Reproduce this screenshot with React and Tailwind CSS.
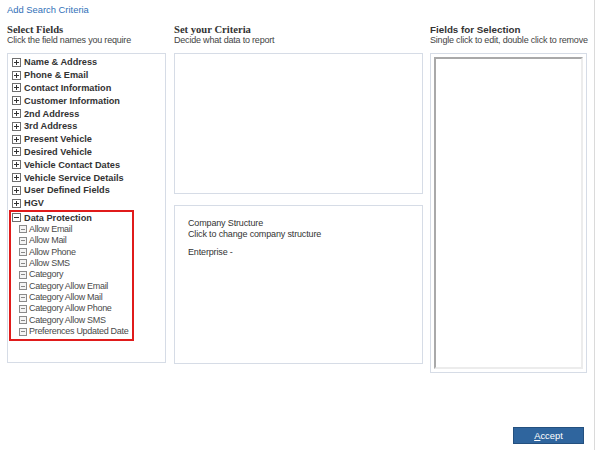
import React from 'react';

const groups = [
  'Name & Address',
  'Phone & Email',
  'Contact Information',
  'Customer Information',
  '2nd Address',
  '3rd Address',
  'Present Vehicle',
  'Desired Vehicle',
  'Vehicle Contact Dates',
  'Vehicle Service Details',
  'User Defined Fields',
  'HGV',
];

const protection = [
  'Allow Email',
  'Allow Mail',
  'Allow Phone',
  'Allow SMS',
  'Category',
  'Category Allow Email',
  'Category Allow Mail',
  'Category Allow Phone',
  'Category Allow SMS',
  'Preferences Updated Date',
];

const Toggle = ({ open }) => (
  <span className="w-[9px] h-[9px] border border-[#6f6f6f] bg-white flex items-center justify-center shrink-0 relative">
    <span className="absolute w-[5px] h-[1px] bg-[#333]" />
    {!open && <span className="absolute w-[1px] h-[5px] bg-[#333]" />}
  </span>
);

const Leaf = () => (
  <span className="w-[8px] h-[8px] border border-[#8a8a8a] bg-[#f4f4f4] flex items-center justify-center shrink-0">
    <span className="w-[4px] h-[1px] bg-[#888]" />
  </span>
);

const Header = ({ title, sub, serif }) => (
  <div className="mb-[7px]">
    <div
      className={`leading-[11px] font-bold text-[#333] whitespace-nowrap ${
        serif ? 'text-[10.6px] font-["Liberation_Serif",serif]' : 'text-[9.8px]'
      }`}
    >
      {title}
    </div>
    <div className="text-[9px] tracking-[-0.2px] leading-[11px] text-[#444] whitespace-nowrap">{sub}</div>
  </div>
);

export default function App() {
  return (
    <div className="w-[597px] h-[450px] bg-white flex font-['Liberation_Sans',Arial,sans-serif] overflow-hidden">
      <div className="w-[595px] h-[450px] border-r border-[#dadada] flex flex-col pl-[7px]">
        <div className="h-[24px] pt-[3px] text-[9.4px] leading-[14px] text-[#3170b8]">Add Search Criteria</div>

        <div className="flex">
          <div className="w-[159px]">
            <Header title="Select Fields" sub="Click the field names you require" serif />
            <div className="h-[310px] border border-[#d6dce6] pt-[2px] pl-[4px]">
              {groups.map((g) => (
                <div key={g} className="h-[12.8px] flex items-center gap-[3px]">
                  <Toggle />
                  <span className="text-[9.2px] leading-[12px] font-bold text-[#333] whitespace-nowrap">{g}</span>
                </div>
              ))}
              <div className="w-[125px] border-2 border-[#e01b1b] -ml-[3px] pl-[1px] pb-[2px]">
                <div className="h-[12px] flex items-center gap-[3px]">
                  <Toggle open />
                  <span className="text-[9.2px] leading-[12px] font-bold text-[#333] whitespace-nowrap">Data Protection</span>
                </div>
                {protection.map((p) => (
                  <div key={p} className="h-[11.4px] flex items-center gap-[2px] pl-[7px]">
                    <Leaf />
                    <span className="text-[9px] tracking-[-0.3px] leading-[11px] text-[#4a4a4a] whitespace-nowrap">{p}</span>
                  </div>
                ))}
              </div>
            </div>
          </div>

          <div className="w-[249px] ml-[8px]">
            <Header title="Set your Criteria" sub="Decide what data to report" serif />
            <div className="h-[141px] border border-[#d6dce6]" />
            <div className="h-[159px] mt-[11px] border border-[#d6dce6] pl-[13px] pt-[12px] text-[9px] tracking-[-0.15px] leading-[11px] text-[#333]">
              <div>Company Structure</div>
              <div>Click to change company structure</div>
              <div className="mt-[7px]">Enterprise -</div>
            </div>
          </div>

          <div className="w-[157px] ml-[7px]">
            <Header title="Fields for Selection" sub="Single click to edit, double click to remove" />
            <div className="h-[320px] border border-[#d6dce6] p-[3px]">
              <div className="h-full border-2 border-t-[#a9a9a9] border-l-[#a9a9a9] border-r-[#ececec] border-b-[#ececec] bg-white" />
            </div>
          </div>
        </div>

        <div className="flex-1" />
        <div className="flex justify-end pr-[10px] pb-[6px]">
          <button className="w-[71px] h-[17px] bg-[#2f659e] border border-[#24507f] text-white text-[9.4px] leading-[15px]">
            <span className="underline">A</span>ccept
          </button>
        </div>
      </div>
    </div>
  );
}
